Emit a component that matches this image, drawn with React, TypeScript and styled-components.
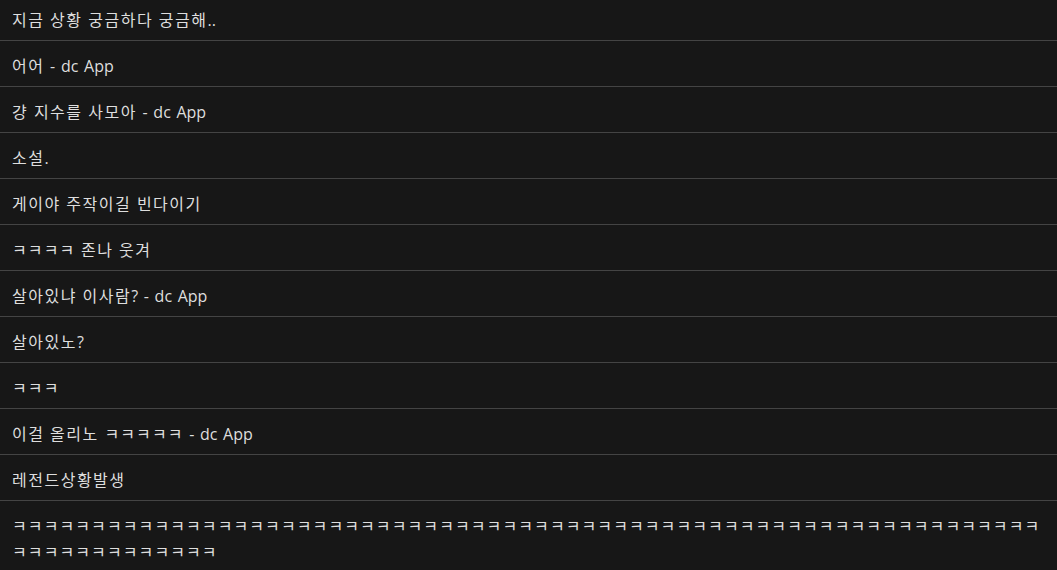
import { FC } from "react";
import styled, { createGlobalStyle } from "styled-components";

const GlobalStyle = createGlobalStyle`
  html, body {
    margin: 0;
    padding: 0;
    background: #171717;
    overflow: hidden;
  }
`;

const CommentList = styled.ul`
  list-style: none;
  margin: -5px 0 0;
  padding: 0;
  height: 575px;
  overflow: hidden;
  background: #171717;
  font-family: "Open Sans", "Noto Sans CJK KR", sans-serif;
  font-size: 16px;
  line-height: 26px;
  word-spacing: 1.5px;
  color: #dedede;
`;

const CommentRow = styled.li`
  padding: 12px 12px 7px;
  border-bottom: 1px solid #444444;
  word-break: break-all;
  cursor: pointer;

  &:last-child {
    border-bottom: none;
  }
`;

/* the CJK font sets hangul a little tighter than the original, so widen runs */
const Run = styled.span<{ $jamo?: boolean }>`
  letter-spacing: ${(p) => (p.$jamo ? "1.1px" : "1.5px")};
`;

const comments: string[] = [
  "지금 상황 궁금하다 궁금해..",
  "어어 - dc App",
  "걍 지수를 사모아 - dc App",
  "소설.",
  "게이야 주작이길 빈다이기",
  "ㅋㅋㅋㅋ 존나 웃겨",
  "살아있냐 이사람? - dc App",
  "살아있노?",
  "ㅋㅋㅋ",
  "이걸 올리노 ㅋㅋㅋㅋㅋ - dc App",
  "레전드상황발생",
  "ㅋ".repeat(78),
];

const renderText = (text: string) =>
  text
    .split(/([\u3131-\u318E]+|[\uAC00-\uD7A3]+)/)
    .filter(Boolean)
    .map((part, i) => {
      const code = part.charCodeAt(0);
      if (code >= 0x3131 && code <= 0x318e) return <Run key={i} $jamo>{part}</Run>;
      if (code >= 0xac00 && code <= 0xd7a3) return <Run key={i}>{part}</Run>;
      return part;
    });

const App: FC = () => {
  return (
    <>
      <GlobalStyle />
      <CommentList>
        {comments.map((text, i) => (
          <CommentRow key={i}>{renderText(text)}</CommentRow>
        ))}
      </CommentList>
    </>
  );
};

export default App;
